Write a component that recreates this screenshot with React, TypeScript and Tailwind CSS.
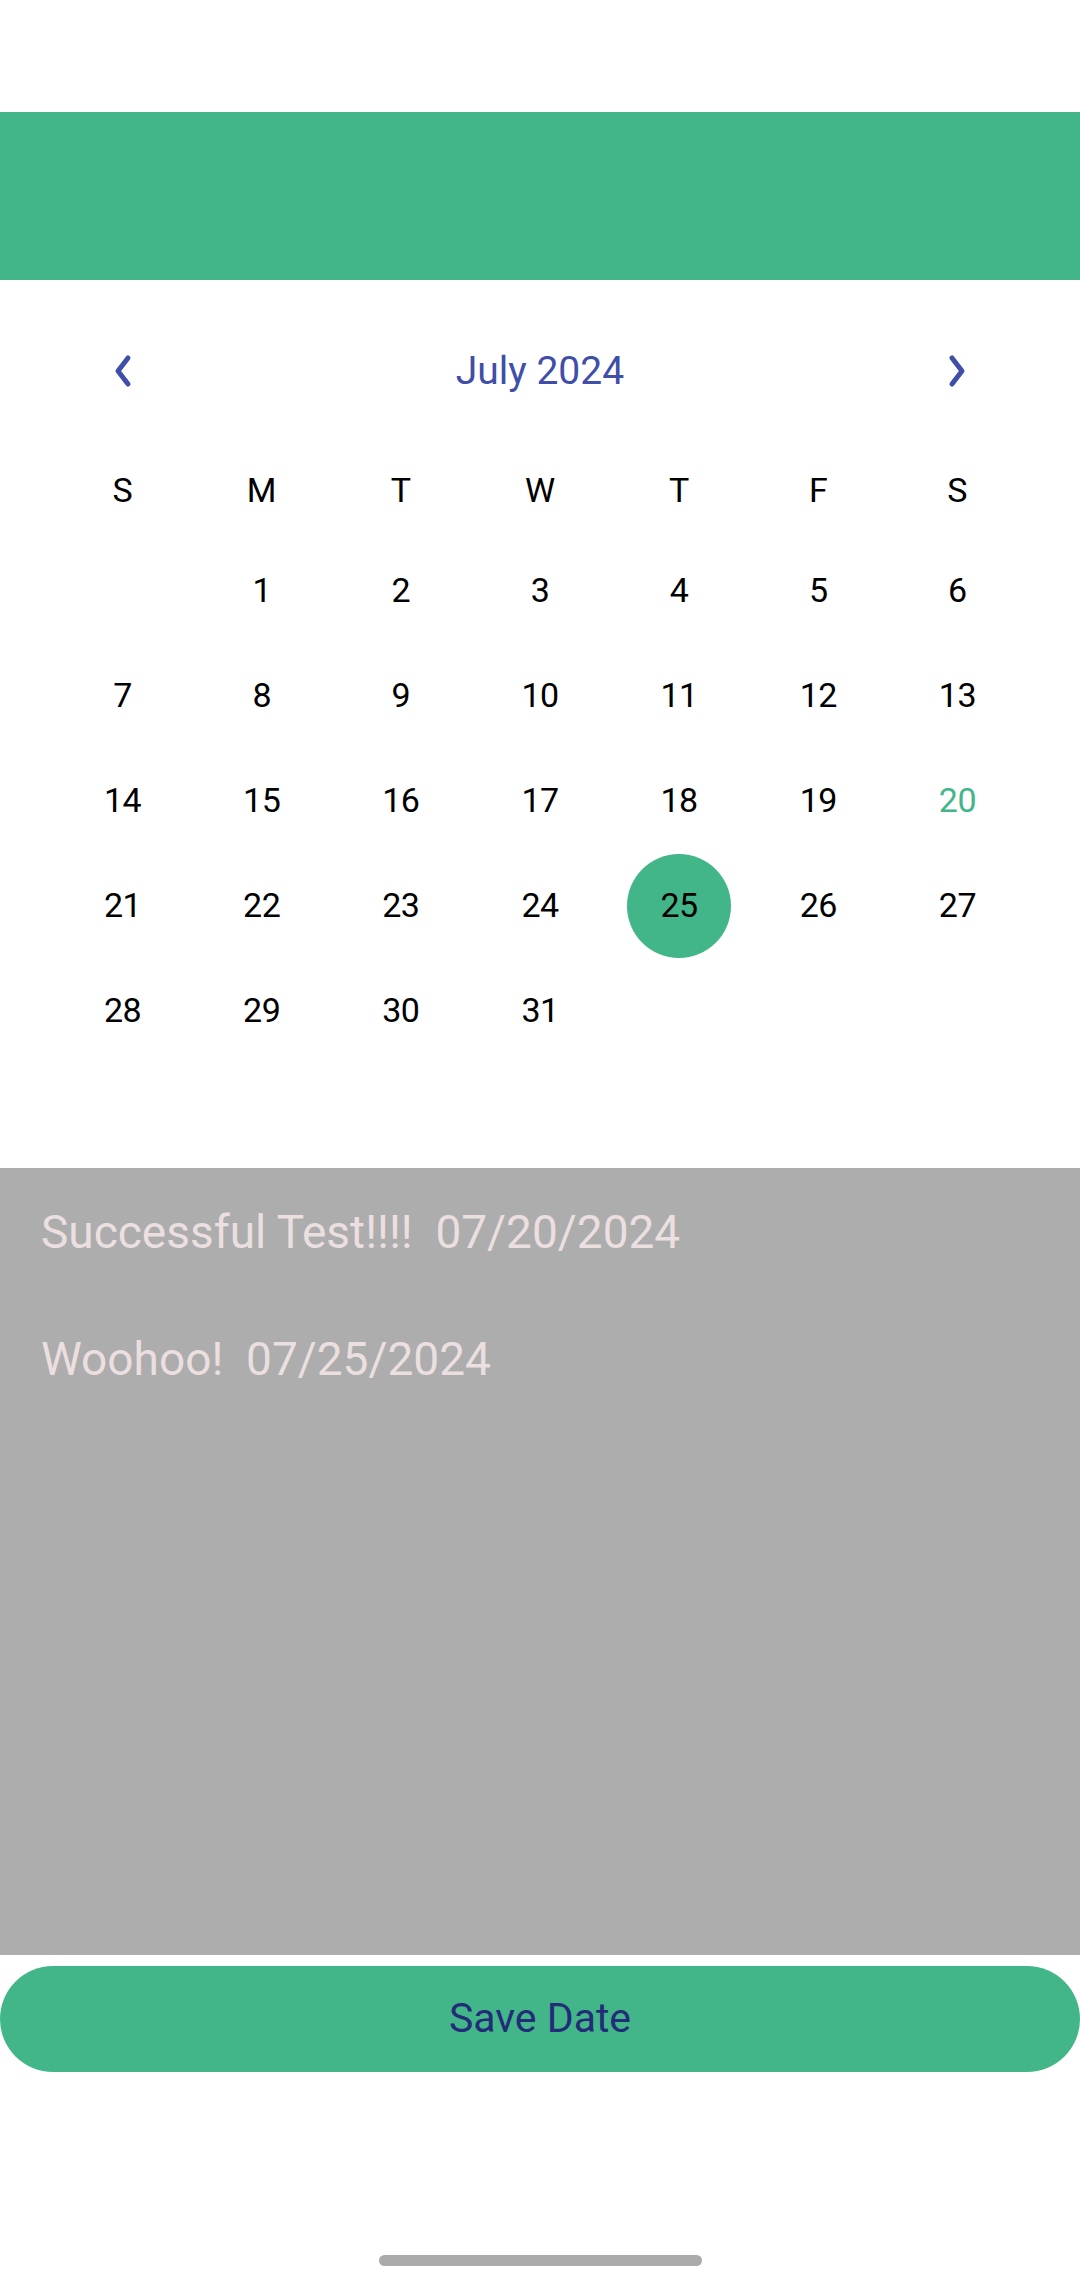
import React from "react";

const WEEKDAYS = ["S", "M", "T", "W", "T", "F", "S"];

// July 2024 starts on a Monday
const WEEKS: (number | null)[][] = [
  [null, 1, 2, 3, 4, 5, 6],
  [7, 8, 9, 10, 11, 12, 13],
  [14, 15, 16, 17, 18, 19, 20],
  [21, 22, 23, 24, 25, 26, 27],
  [28, 29, 30, 31, null, null, null],
];

const TODAY = 20;
const SELECTED = 25;

function Chevron({ dir }: { dir: "left" | "right" }) {
  return (
    <svg width="22" height="34" viewBox="0 0 22 34" fill="none">
      <polyline
        points={dir === "left" ? "16,4 6,17 16,30" : "6,4 16,17 6,30"}
        stroke="#3F4EA8"
        strokeWidth="5"
        strokeLinecap="round"
        strokeLinejoin="round"
      />
    </svg>
  );
}

function DayCell({ day }: { day: number | null }) {
  if (day === null) return <div className="h-[105px]" />;
  const selected = day === SELECTED;
  const today = day === TODAY;
  return (
    <div className="h-[105px] flex items-center justify-center">
      <div
        className={`w-[104px] h-[104px] rounded-full flex items-center justify-center text-[34px] tracking-[-0.5px] ${
          selected ? "bg-[#43B689] text-black" : today ? "text-[#43B689]" : "text-black"
        }`}
      >
        {day}
      </div>
    </div>
  );
}

export default function App() {
  return (
    <div className="w-[1080px] h-[2280px] bg-white flex flex-col overflow-hidden font-['Roboto',sans-serif]">
      {/* status bar space */}
      <div className="h-[112px] shrink-0" />

      {/* green app bar */}
      <div className="h-[168px] shrink-0 bg-[#43B689]" />

      {/* calendar */}
      <div className="px-[53px] pt-[61px] shrink-0">
        <div className="grid grid-cols-7 h-[60px] items-center">
          <div className="flex justify-center">
            <Chevron dir="left" />
          </div>
          <div className="col-span-5 text-center text-[39px] text-[#3F4EA8]">July 2024</div>
          <div className="flex justify-center">
            <Chevron dir="right" />
          </div>
        </div>

        <div className="grid grid-cols-7 h-[95px] mt-[42px] items-center">
          {WEEKDAYS.map((d, i) => (
            <div key={i} className="text-center text-[34px] text-black">
              {d}
            </div>
          ))}
        </div>

        {WEEKS.map((week, wi) => (
          <div key={wi} className="grid grid-cols-7">
            {week.map((day, di) => (
              <DayCell key={di} day={day} />
            ))}
          </div>
        ))}
      </div>

      {/* saved dates list */}
      <div className="mt-[105px] h-[787px] shrink-0 bg-[#ADADAD] pl-[41px] pt-[37px] text-[46px] leading-[55px] text-[#EBDFE0]">
        <p className="whitespace-pre">Successful Test!!!!  07/20/2024</p>
        <p className="whitespace-pre mt-[72px]">Woohoo!  07/25/2024</p>
      </div>

      {/* save button */}
      <button className="mt-[11px] h-[106px] w-full shrink-0 rounded-full bg-[#43B689] text-[41px] text-[#232C78]">
        Save Date
      </button>

      {/* gesture bar */}
      <div className="mt-[183px] flex justify-center shrink-0">
        <div className="w-[323px] h-[11px] rounded-full bg-[#AAAAAA]" />
      </div>
    </div>
  );
}
